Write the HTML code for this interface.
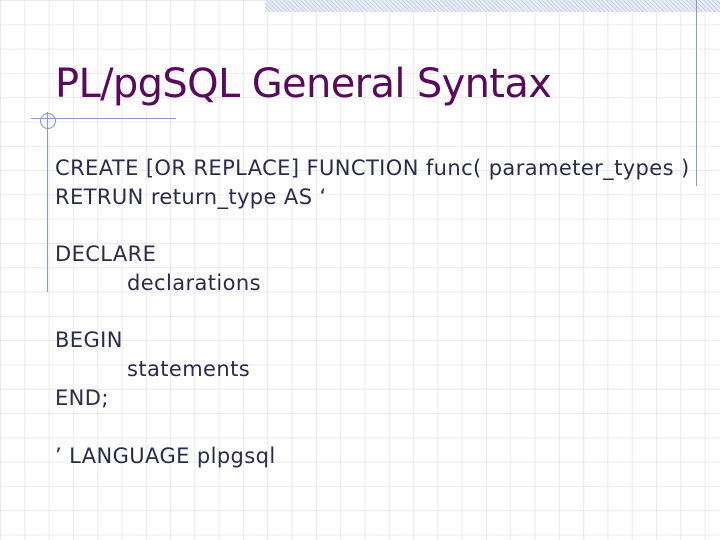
<!DOCTYPE html>
<html><head><style>
html,body{margin:0;padding:0}
body{width:720px;height:540px;position:relative;overflow:hidden;background:#fff;
background-image:linear-gradient(to right,rgba(210,210,210,.45) 1px,transparent 1px),linear-gradient(to bottom,rgba(210,210,210,.45) 1px,transparent 1px);
background-size:24.3px 24.3px;background-position:0 0;font-family:"DejaVu Sans","Liberation Sans",sans-serif}
.hatch{position:absolute;left:265px;top:0;width:455px;height:12px;background:repeating-linear-gradient(45deg,#c9d3ea 0 1px,#e8ecf6 1px 3px)}
.l{position:absolute;background:#8a9ac8}
.t{position:absolute;left:55px;top:61px;font-size:40px;color:#5a0a5c;white-space:nowrap;letter-spacing:-0.65px}
.b{position:absolute;font-size:21px;color:#2b2b4d;white-space:nowrap;letter-spacing:0.4px}
</style></head><body>
<div class="hatch"></div>
<div class="l" style="left:696px;top:0;width:1px;height:186px"></div>
<div class="l" style="left:47px;top:112px;width:1px;height:180px"></div>
<div class="l" style="left:31px;top:118px;width:145px;height:1px"></div>
<div style="position:absolute;left:40px;top:113px;width:14px;height:14px;border:1px solid #8a9ac8;border-radius:50%"></div>
<div class="t">PL/pgSQL General Syntax</div>
<div class="b" style="left:55px;top:156px">CREATE [OR REPLACE] FUNCTION func( parameter_types )</div>
<div class="b" style="left:55px;top:185px">RETRUN return_type AS ‘</div>
<div class="b" style="left:55px;top:242px">DECLARE</div>
<div class="b" style="left:127px;top:271px">declarations</div>
<div class="b" style="left:55px;top:328px">BEGIN</div>
<div class="b" style="left:127px;top:357px">statements</div>
<div class="b" style="left:55px;top:386px">END;</div>
<div class="b" style="left:55px;top:444px">’ LANGUAGE plpgsql</div>
</body></html>
